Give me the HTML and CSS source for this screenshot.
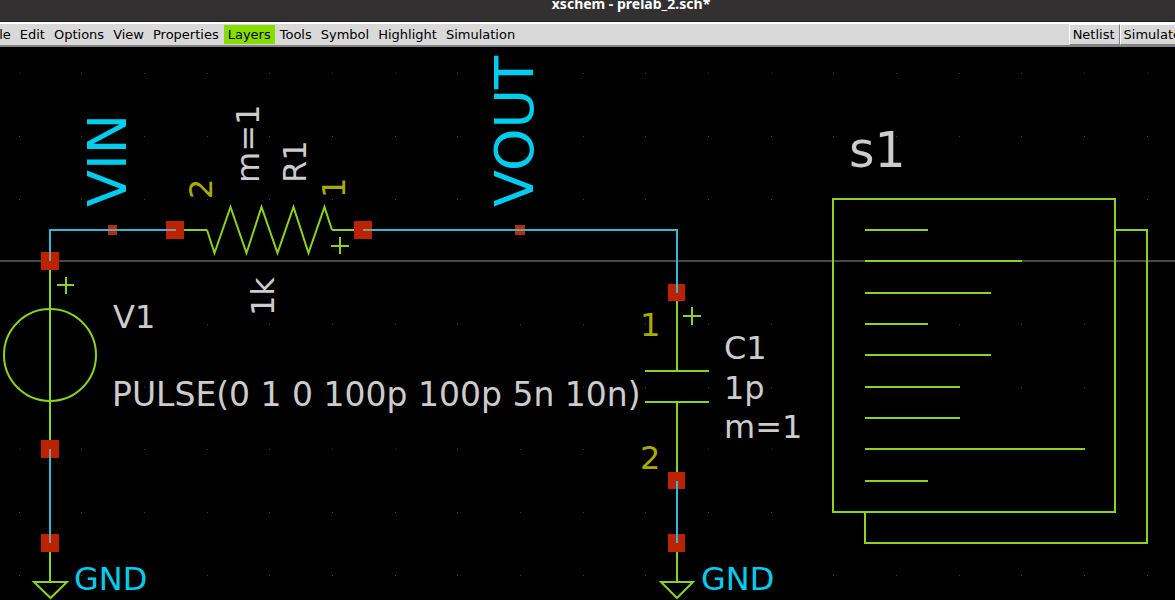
FILE: index.html
```html
<!DOCTYPE html>
<html lang="en">
<head>
<meta charset="utf-8">
<title>xschem - prelab_2.sch*</title>
<link rel="stylesheet" href="styles.css">
</head>
<body>
<header class="titlebar"><h1 class="title">xschem - prelab_2.sch*</h1></header>
<nav class="menubar">
  <div class="menus">
    <button class="menu">File</button>
    <button class="menu">Edit</button>
    <button class="menu">Options</button>
    <button class="menu">View</button>
    <button class="menu">Properties</button>
    <button class="menu menu-active">Layers</button>
    <button class="menu">Tools</button>
    <button class="menu">Symbol</button>
    <button class="menu">Highlight</button>
    <button class="menu">Simulation</button>
  </div>
  <div class="actions">
    <button class="action">Netlist</button>
    <button class="action">Simulate</button>
  </div>
</nav>
<main class="sheet">
<svg class="schematic" role="img" aria-label="RC circuit schematic">
  <g transform="translate(0 -47)">
    <!-- grid -->
    <defs>
      <path id="dots" d="M19 0h1v1h-1zM81 0h1v1h-1zM144 0h1v1h-1zM207 0h1v1h-1zM269 0h1v1h-1zM332 0h1v1h-1zM395 0h1v1h-1zM457 0h1v1h-1zM520 0h1v1h-1zM583 0h1v1h-1zM645 0h1v1h-1zM708 0h1v1h-1zM771 0h1v1h-1zM833 0h1v1h-1zM896 0h1v1h-1zM959 0h1v1h-1zM1021 0h1v1h-1zM1084 0h1v1h-1zM1147 0h1v1h-1z"/>
    </defs>
    <g class="grid">
      <use href="#dots" y="73"/><use href="#dots" y="136"/><use href="#dots" y="199"/>
      <use href="#dots" y="324"/><use href="#dots" y="387"/><use href="#dots" y="449"/>
      <use href="#dots" y="512"/><use href="#dots" y="575"/>
    </g>
    <line class="axis" x1="0" y1="261" x2="100%" y2="261"/>

    <!-- symbols -->
    <g class="symbol">
      <path d="M50 261V449M57 285H74M66 277V294"/>
      <path d="M50 543V582"/>
      <path d="M184 230H207M332 230H354M331 246H349M340 237V254"/>
      <path d="M677 293V371M645 371H709M645 402H709M677 402V481M683 316H701M692 307V325"/>
      <path d="M677 543V582"/>
      <path d="M833 199H1115V512H833Z"/>
      <path d="M1115 230H1147V543H865V512"/>
      <path d="M865 230H928M865 261H1022M865 293H991M865 324H928M865 355H991M865 387H960M865 418H960M865 449H1085M865 481H928"/>
    </g>
    <g class="symbol slanted">
      <circle cx="50" cy="355" r="46"/>
      <path d="M34 582H67L50.500 598Z"/>
      <path d="M207 230L214.500 253L230.500 207L246.500 253L261.500 207L277.500 253L293.500 207L308.500 253L324.500 207L332 230"/>
      <path d="M661 582H693L677 598Z"/>
    </g>

    <!-- pins -->
    <g class="pin">
      <path d="M41 252h18v18h-18zM166 221h18v18h-18zM354 221h18v18h-18zM41 440h18v18h-18zM41 534h18v18h-18zM668 284h17v17h-17zM668 472h17v17h-17zM668 534h17v18h-17z"/>
      <path class="pin-label" d="M108 225h9v10h-9zM515 225h10v10h-10z"/>
    </g>

    <!-- wires -->
    <path class="wire" d="M50 261V230H175M363 230H677V293M50 449V543M677 481V543"/>
    <path class="wire-pin" d="M50 252V261M166 230H176M363 230H372M50 449V458M50 534V543M108 230H117M515 230H525"/>

    <!-- labels -->
    <g class="net large">
      <text transform="translate(126 207) rotate(-90)">VIN</text>
      <text transform="translate(533 207) rotate(-90)">VOUT</text>
    </g>
    <g class="net">
      <text x="74" y="590">GND</text>
      <text x="701" y="590">GND</text>
    </g>
    <g class="number">
      <text transform="translate(212 199) rotate(-90)">2</text>
      <text transform="translate(345 198) rotate(-90)">1</text>
      <text x="640" y="336">1</text>
      <text x="640" y="469">2</text>
    </g>
    <g class="value">
      <text transform="translate(259 183) rotate(-90)">m=1</text>
      <text transform="translate(306 183) rotate(-90)">R1</text>
      <text transform="translate(274 316) rotate(-90)">1k</text>
      <text x="113" y="328">V1</text>
      <text class="source" x="112" y="406">PULSE(0 1 0 100p 100p 5n 10n)</text>
      <text x="724" y="359">C1</text>
      <text x="724" y="399">1p</text>
      <text x="724" y="438">m=1</text>
      <text class="sheet-name" x="849" y="167">s1</text>
    </g>
  </g>
</svg>
</main>
</body>
</html>
```
FILE: styles.css
```css
* { box-sizing: border-box; }

body {
  margin: 0;
  height: 100vh;
  display: flex;
  flex-direction: column;
  overflow: hidden;
  background: #000;
  font-family: "DejaVu Sans", sans-serif;
}

.titlebar {
  flex: none;
  height: 22px;
  padding-left: 87px;
  overflow: hidden;
  background: #333031;
  border-bottom: 1px solid #1c1a1b;
}

.title {
  margin: 0;
  color: #fff;
  font: bold 14px/8px "Noto Sans", sans-serif;
  text-align: center;
}

.menubar {
  flex: none;
  display: flex;
  justify-content: space-between;
  height: 25px;
  overflow: hidden;
  background: #d9d9d9;
  border-top: 2px solid #fff;
  border-bottom: 2px solid #828282;
}

.menus {
  display: flex;
  gap: 1px;
  margin-left: -15px;
  padding: 1px 0;
}

.menu,
.action {
  margin: 0;
  padding: 0 4px;
  border: 0;
  background: transparent;
  color: #000;
  font: 13px/19px "DejaVu Sans", sans-serif;
  white-space: nowrap;
}

.menu-active { background: #88dd00; }

.actions {
  display: flex;
  margin-right: -11px;
}

.action {
  padding: 0 4px 0 3px;
  border: 1px solid #fff;
  border-right-color: #828282;
  border-bottom: 1px solid #828282;
}

.sheet {
  flex: 1;
  min-height: 0;
}

.schematic {
  display: block;
  width: 100%;
  height: 100%;
}

.grid { fill: #444; }
.axis { stroke: #484848; stroke-width: 2px; }

.symbol {
  fill: none;
  stroke: #8bd31e;
  stroke-width: 2px;
  shape-rendering: crispEdges;
}

.slanted { shape-rendering: auto; }

.pin { fill: #bb2200; }
.pin-label { fill: #a83214; }
.wire { fill: none; stroke: #32b9d6; stroke-width: 2px; }
.wire-pin { fill: none; stroke: #8c9490; stroke-width: 2px; }

text { font-size: 32px; }
.net { fill: #00ccee; }
.large text { font-size: 54px; }
.number { fill: #aaaa00; }
.value { fill: #cccccc; }
.value .source { font-size: 33px; }
.value .sheet-name { font-size: 49px; }
```
